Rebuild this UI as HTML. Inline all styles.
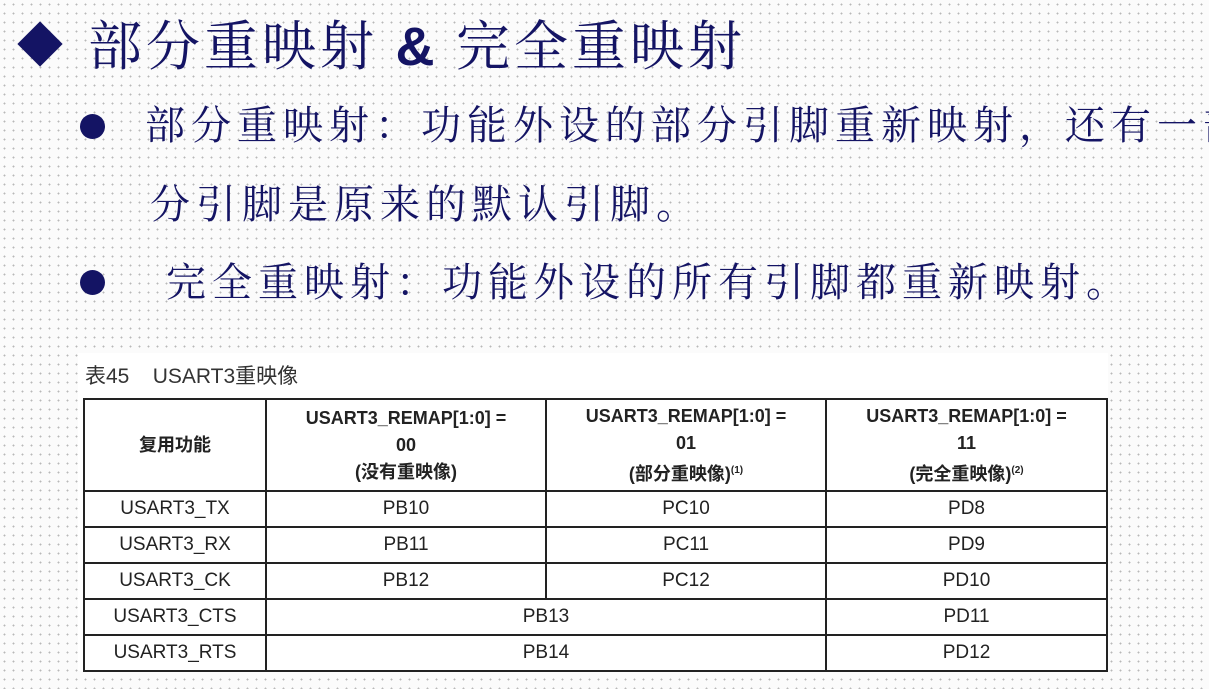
<!DOCTYPE html>
<html><head><meta charset="utf-8"><style>
body{margin:0;width:1209px;height:689px;overflow:hidden;background-color:#fbfbfb;background-image:radial-gradient(circle,#b8b8b8 0.8px,transparent 1.1px);background-size:9px 9px;position:relative;font-family:"Liberation Serif","Noto Serif CJK SC",serif;color:#141464}
.t{position:absolute;white-space:nowrap}
.dia{position:absolute;left:24px;top:28px;width:32px;height:32px;background:#141464;transform:rotate(45deg)}
.dot{position:absolute;width:25px;height:25px;border-radius:50%;background:#141464}
.box{position:absolute;left:78px;top:353px;width:1030px;height:318px;background:#fff}
table{position:absolute;left:83px;top:398px;width:1023px;table-layout:fixed;border-collapse:collapse;font-family:"Liberation Sans","Noto Sans CJK SC",sans-serif;color:#222;font-size:19px}
td{border:2px solid #222;text-align:center;padding:0;height:34px}
th{border:2px solid #222;font-weight:bold;font-size:18px;line-height:27px;height:90px;padding:0}
sup{font-size:10px}
</style></head><body>
<div class="dia"></div>
<div class="t" style="left:88px;top:15px;font-size:54px;line-height:64px;letter-spacing:4px">部分重映射 <b style="font-family:'Liberation Sans',sans-serif">&amp;</b> 完全重映射</div>
<div class="dot" style="left:80px;top:114px"></div>
<div class="t" style="left:145px;top:103px;font-size:40px;line-height:46px;letter-spacing:6px">部分重映射：功能外设的部分引脚重新映射，还有一部</div>
<div class="t" style="left:150px;top:182px;font-size:40px;line-height:46px;letter-spacing:6px">分引脚是原来的默认引脚。</div>
<div class="dot" style="left:80px;top:270px"></div>
<div class="t" style="left:166px;top:260px;font-size:40px;line-height:46px;letter-spacing:6px">完全重映射：功能外设的所有引脚都重新映射。</div>
<div class="box"></div>
<div class="t" style="left:85px;top:360px;font-family:'Liberation Sans','Noto Sans CJK SC',sans-serif;font-size:21px;color:#333">表45&nbsp;&nbsp;&nbsp; USART3重映像</div>
<table>
<colgroup><col style="width:182px"><col style="width:280px"><col style="width:280px"><col style="width:281px"></colgroup>
<tr><th>复用功能</th><th>USART3_REMAP[1:0] =<br>00<br>(没有重映像)</th><th>USART3_REMAP[1:0] =<br>01<br>(部分重映像)<sup>(1)</sup></th><th>USART3_REMAP[1:0] =<br>11<br>(完全重映像)<sup>(2)</sup></th></tr>
<tr><td>USART3_TX</td><td>PB10</td><td>PC10</td><td>PD8</td></tr>
<tr><td>USART3_RX</td><td>PB11</td><td>PC11</td><td>PD9</td></tr>
<tr><td>USART3_CK</td><td>PB12</td><td>PC12</td><td>PD10</td></tr>
<tr><td>USART3_CTS</td><td colspan="2">PB13</td><td>PD11</td></tr>
<tr><td>USART3_RTS</td><td colspan="2">PB14</td><td>PD12</td></tr>
</table>
</body></html>
